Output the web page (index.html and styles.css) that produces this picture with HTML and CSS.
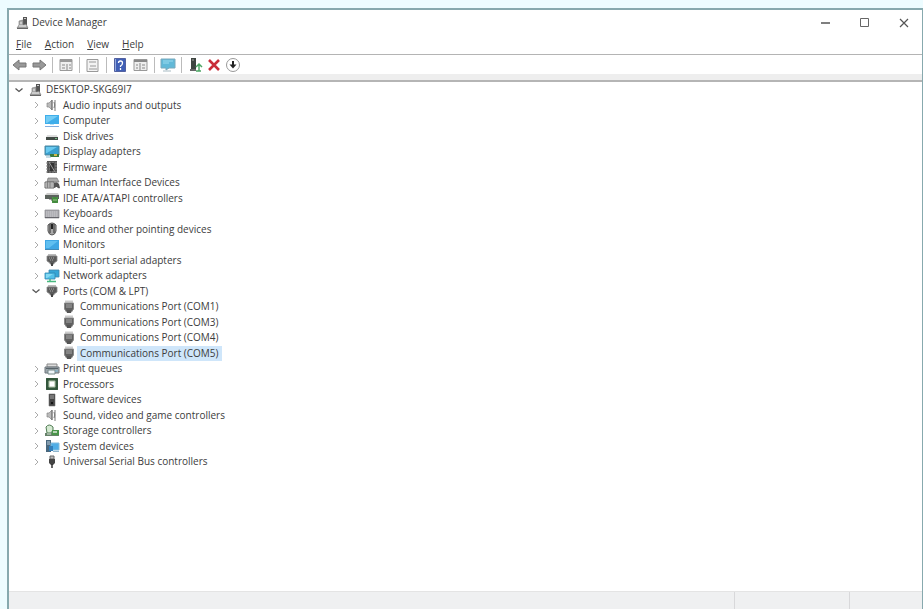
FILE: index.html
```html
<!DOCTYPE html>
<html lang="en">
<head>
<meta charset="utf-8">
<title>Device Manager</title>
<link rel="stylesheet" href="styles.css">
</head>
<body>
<svg class="sprite" aria-hidden="true">
  <symbol id="closed" viewBox="0 0 10 10"><path d="M4 2l3 3-3 3" fill="none" stroke="#aaa"/></symbol>
  <symbol id="open" viewBox="0 0 10 10"><path d="M1.500 3.500l3.500 3 3.500-3" fill="none" stroke="#555" stroke-width="1.300"/></symbol>
  <symbol id="pc" viewBox="0 0 16 14"><path d="M9 1h4v8H9z" fill="#555"/><path d="M10 2h2v1h-2z" fill="#ccc"/><path d="M5 5l4-1v5l3-1 2 4H3l2-3z" fill="#aaa" stroke="#777" stroke-width=".6"/><path d="M5 10h7M6 7h2" stroke="#eee"/><path d="M3 12.500h11" stroke="#666"/></symbol>
  <symbol id="speaker" viewBox="0 0 16 14"><path d="M3 5h2l3-3v10L5 9H3z" fill="#bbb" stroke="#888" stroke-width=".7"/><path d="M8 2v10" stroke="#666"/><path d="M10 4q1.500 3 0 6M11 2v11" fill="none" stroke="#777"/></symbol>
  <symbol id="computer" viewBox="0 0 16 14"><path d="M1 1h14v9H1z" fill="#40aeea"/><path d="M2 2h12L3 9H2z" fill="#72ccf5"/><path d="M6 10h4v1H6z" fill="#b8dff5"/><path d="M1 12.500h14" stroke="#82aee0"/></symbol>
  <symbol id="disk" viewBox="0 0 16 14"><path d="M3 6h10l1 3H2z" fill="#ddd"/><path d="M2 8h12v3H2z" fill="#424a45"/><path d="M11 9h2v1h-2z" fill="#72b77f"/></symbol>
  <symbol id="display" viewBox="0 0 16 14"><path d="M1 1h14v9H1z" fill="#389fcf" stroke="#4d879f"/><path d="M2 2h11L3 8H2z" fill="#69c9ef"/><path d="M6 9h9v3H6z" fill="#397a3f"/><path d="M10 9h3v2h-3z" fill="#d2b64b"/><path d="M2 12h5" stroke="#8db7cb"/></symbol>
  <symbol id="firmware" viewBox="0 0 16 14"><path d="M3 1h10v12H3z" fill="#555"/><path d="M2 3h12M2 6h12M2 9h12M2 12h12" stroke="#888" stroke-dasharray="2 1"/><path d="M6 3h4v8H6z" fill="#333"/><path d="M5 2l6 10" stroke="#999"/></symbol>
  <symbol id="hid" viewBox="0 0 16 14"><path d="M4 2h9l2 4H3z" fill="#aaa" stroke="#777" stroke-width=".7"/><path d="M1 6h9v6H1z" fill="#ddd" stroke="#666"/><path d="M2 8h7M2 10h7M3.500 6v6M6 6v6" stroke="#777" stroke-width=".8"/><path d="M10 7q3-2 5 1l1 4q-2 1-3-1h-1q-2 2-2 0z" fill="#555"/></symbol>
  <symbol id="ide" viewBox="0 0 16 14"><path d="M1 4l2-2h11l1 2z" fill="#ccc"/><path d="M1 4h14v4H1z" fill="#5b625d"/><path d="M5 8h3v2" fill="none" stroke="#555"/><path d="M8 6h6v6H8z" fill="#50944a"/><circle cx="11" cy="9" r="3" fill="#438a3e"/><path d="M9 9h4" stroke="#9bca87"/></symbol>
  <symbol id="keyboard" viewBox="0 0 16 14"><path d="M1 3h14v8H1z" fill="#a5a5aa" stroke="#8b8b90" stroke-width=".7"/><path d="M2 5h12M2 7h12M2 9h12" stroke="#dedee2" stroke-width=".8" stroke-dasharray="1.500 .5"/><path d="M1 10.500h14" stroke="#66666c"/></symbol>
  <symbol id="mouse" viewBox="0 0 16 14"><path d="M4 3q4-4 8 0v6q-1 4-4 4t-4-4z" fill="#aaa" stroke="#555"/><path d="M6 2v9M10 2v9" stroke="#444" stroke-width="1.200"/><path d="M8 2v5" stroke="#222" stroke-width="2"/></symbol>
  <symbol id="monitor" viewBox="0 0 16 14"><path d="M1 2h14v10H1z" fill="#3fa6e3"/><path d="M2 3h12L5 10H2z" fill="#60bff0"/><path d="M1 11.500h14" stroke="#4389b6"/></symbol>
  <symbol id="port" viewBox="0 0 16 14"><path d="M4 2h8" stroke="#bbb" stroke-width="2"/><path d="M3 3h10v5l-3 2v1H6v-1L3 8z" fill="#5b5b5b" stroke="#888" stroke-width=".8"/><path d="M5 5h6M6 7h4" stroke="#aaa" stroke-dasharray="1 1"/><path d="M8 10v3" stroke="#444" stroke-width="2"/></symbol>
  <symbol id="com" viewBox="0 0 16 14"><path d="M4 1.500h8" stroke="#ccc" stroke-width="2"/><path d="M3.500 3h9v6l-2 3h-5l-2-3z" fill="#606060" stroke="#8a8a8a"/><path d="M5 5h6M5 7h6" stroke="#bbb" stroke-width=".8"/><path d="M6 10h4v3H6z" fill="#555"/></symbol>
  <symbol id="network" viewBox="0 0 16 14"><path d="M5 1h10v7H5z" fill="#37a6d6" stroke="#4085ab" stroke-width=".8"/><path d="M1 4h10v6H1z" fill="#54c1e9" stroke="#3186b0" stroke-width=".8"/><path d="M2 5h7l-6 4H2z" fill="#85d9f2"/><path d="M6 10v3M3 12.500h9" stroke="#48b980" stroke-width="1.500"/></symbol>
  <symbol id="printer" viewBox="0 0 16 14"><path d="M3 2h10v3H3z" fill="#ddd" stroke="#888"/><path d="M1 5h14v6H1z" fill="#9da7ad" stroke="#71797e"/><path d="M4 8h7v4H4z" fill="#eef5f9" stroke="#788"/><path d="M2 6.500h12" stroke="#59646a"/><path d="M11 9h3" stroke="#78b8d6"/></symbol>
  <symbol id="cpu" viewBox="0 0 16 14"><path d="M2 1h12v12H2z" fill="#416348"/><path d="M5 4h6v6H5z" fill="#fff" stroke="#a6bda0"/><path d="M3 2h10v10H3z" fill="none" stroke="#274d31"/></symbol>
  <symbol id="software" viewBox="0 0 16 14"><path d="M5 1h6v12H5z" fill="#444" stroke="#777" stroke-width=".6"/><path d="M6 3h4M6 5h4" stroke="#aaa"/><path d="M7 9h2v2H7z" fill="#151515"/></symbol>
  <symbol id="storage" viewBox="0 0 16 14"><path d="M2 3q3-4 7 0v3l-2 3H3z" fill="#d5ead2" stroke="#4f7b53"/><path d="M1 9h14v3H1z" fill="#668269"/><path d="M8 6h7v5H8z" fill="#499449"/><path d="M9 7h4v2H9z" fill="#b8d4b6"/><path d="M3 10h4" stroke="#d8e5da"/></symbol>
  <symbol id="system" viewBox="0 0 16 14"><path d="M2 1h5v12H2z" fill="#49677d"/><path d="M3 3h3M3 5h3" stroke="#bdd0df"/><path d="M7 4h8v7H7z" fill="#4fade6" stroke="#81bbdd"/><path d="M5 7h4v5H5z" fill="#327fbb"/><path d="M9 12.500h6" stroke="#91b6cd"/></symbol>
  <symbol id="usb" viewBox="0 0 16 14"><path d="M6 1h4v3H6z" fill="#bbb" stroke="#666"/><path d="M5 4h6v4l-2 2H7L5 8z" fill="#444"/><path d="M8 9v4" stroke="#333" stroke-width="1.500"/></symbol>
</svg>

<main class="window">
  <header class="titlebar">
    <svg class="icon"><use href="#pc"/></svg>
    <h1 class="title">Device Manager</h1>
    <div class="controls">
      <button aria-label="Minimize"><svg viewBox="0 0 12 12"><path d="M1 6h9" stroke="#555" stroke-width="1.500"/></svg></button>
      <button aria-label="Maximize"><svg viewBox="0 0 12 12"><path d="M1.500 1.500h8v8h-8z" fill="none" stroke="#666"/></svg></button>
      <button aria-label="Close"><svg viewBox="0 0 12 12"><path d="M2 2l8 8M10 2l-8 8" stroke="#555" stroke-width="1.200"/></svg></button>
    </div>
  </header>

  <nav class="menubar" aria-label="Menu">
    <button><u>F</u>ile</button>
    <button><u>A</u>ction</button>
    <button><u>V</u>iew</button>
    <button><u>H</u>elp</button>
  </nav>

  <div class="toolbar" role="toolbar" aria-label="Tools">
    <div class="group">
      <button aria-label="Back"><svg viewBox="0 0 16 16"><path d="M1 8l6-5v3h7v4H7v3z" fill="#999" stroke="#777"/></svg></button>
      <button aria-label="Forward"><svg viewBox="0 0 16 16"><path d="M15 8L9 3v3H2v4h7v3z" fill="#999" stroke="#777"/></svg></button>
    </div>
    <div class="group">
      <button aria-label="Show console tree"><svg viewBox="0 0 16 16"><path d="M2 2.500h12v11H2z" fill="#eee" stroke="#999"/><path d="M2 4h12" stroke="#999" stroke-width="2"/><path d="M4 8h3M4 11h3M9 7v6M11 8h2M11 11h2" stroke="#888"/></svg></button>
    </div>
    <div class="group">
      <button aria-label="Properties"><svg viewBox="0 0 16 16"><path d="M2 2.500h11v12H2z" fill="#f3f3f3" stroke="#999"/><path d="M4 5h7M5 9h6M4 12h8" stroke="#999"/></svg></button>
    </div>
    <div class="group wide">
      <button aria-label="Help"><svg viewBox="0 0 16 16"><path d="M2.500 1.500h11v13h-11z" fill="#405fb6" stroke="#5261a0"/><path d="M3.500 2v12" stroke="#93a9dd"/><path d="M6.500 6q0-2 2-2t2 2-2 3v1M8.500 11v2" fill="none" stroke="#fff" stroke-width="1.300"/></svg></button>
      <button aria-label="Show action pane"><svg viewBox="0 0 16 16"><path d="M1 2.500h13v11H1z" fill="#eee" stroke="#999"/><path d="M1 4h13" stroke="#888" stroke-width="2"/><path d="M3 8h2M3 11h2M7 6v7M9 8h3M9 11h3" stroke="#888"/></svg></button>
    </div>
    <div class="group">
      <button aria-label="Scan for hardware changes"><svg viewBox="0 0 16 16"><path d="M1 2h14v9H9l-3 2v-2H1z" fill="#62b9d8" stroke="#7aaabd"/><path d="M3 4h10M3 6h6" stroke="#9cdbef"/><path d="M3 14h8" stroke="#a8bbc3"/></svg></button>
    </div>
    <div class="group">
      <button aria-label="Update driver"><svg viewBox="0 0 16 16"><path d="M4 1h5v11H4z" fill="#3e4541"/><path d="M5 3h2" stroke="#aaa"/><path d="M3 13h6" stroke="#666" stroke-width="2"/><path d="M12 7v7M9 10l3-3 3 3M9 14h5" fill="none" stroke="#4da665" stroke-width="1.500"/></svg></button>
      <button aria-label="Uninstall device"><svg viewBox="0 0 16 16"><path d="M3 3l10 10M13 3L3 13" stroke="#c92c38" stroke-width="2.600"/></svg></button>
      <button aria-label="Disable device"><svg viewBox="0 0 16 16"><circle cx="8" cy="8" r="6.500" fill="#fff" stroke="#999"/><path d="M8 4v4" stroke="#222" stroke-width="2"/><path d="M4.500 7.500h7L8 11.500z" fill="#222"/></svg></button>
    </div>
  </div>

  <ul class="tree" role="tree" aria-label="Devices">
    <li class="root"><button aria-label="Collapse"><svg><use href="#open"/></svg></button><svg class="icon"><use href="#pc"/></svg><span>DESKTOP-SKG69I7</span></li>
    <li><button aria-label="Expand"><svg><use href="#closed"/></svg></button><svg class="icon"><use href="#speaker"/></svg><span>Audio inputs and outputs</span></li>
    <li><button aria-label="Expand"><svg><use href="#closed"/></svg></button><svg class="icon"><use href="#computer"/></svg><span>Computer</span></li>
    <li><button aria-label="Expand"><svg><use href="#closed"/></svg></button><svg class="icon"><use href="#disk"/></svg><span>Disk drives</span></li>
    <li><button aria-label="Expand"><svg><use href="#closed"/></svg></button><svg class="icon"><use href="#display"/></svg><span>Display adapters</span></li>
    <li><button aria-label="Expand"><svg><use href="#closed"/></svg></button><svg class="icon"><use href="#firmware"/></svg><span>Firmware</span></li>
    <li><button aria-label="Expand"><svg><use href="#closed"/></svg></button><svg class="icon"><use href="#hid"/></svg><span>Human Interface Devices</span></li>
    <li><button aria-label="Expand"><svg><use href="#closed"/></svg></button><svg class="icon"><use href="#ide"/></svg><span>IDE ATA/ATAPI controllers</span></li>
    <li><button aria-label="Expand"><svg><use href="#closed"/></svg></button><svg class="icon"><use href="#keyboard"/></svg><span>Keyboards</span></li>
    <li><button aria-label="Expand"><svg><use href="#closed"/></svg></button><svg class="icon"><use href="#mouse"/></svg><span>Mice and other pointing devices</span></li>
    <li><button aria-label="Expand"><svg><use href="#closed"/></svg></button><svg class="icon"><use href="#monitor"/></svg><span>Monitors</span></li>
    <li><button aria-label="Expand"><svg><use href="#closed"/></svg></button><svg class="icon"><use href="#port"/></svg><span>Multi-port serial adapters</span></li>
    <li><button aria-label="Expand"><svg><use href="#closed"/></svg></button><svg class="icon"><use href="#network"/></svg><span>Network adapters</span></li>
    <li><button aria-label="Collapse"><svg><use href="#open"/></svg></button><svg class="icon"><use href="#port"/></svg><span>Ports (COM &amp; LPT)</span></li>
    <li class="device"><svg class="icon"><use href="#com"/></svg><span>Communications Port (COM1)</span></li>
    <li class="device"><svg class="icon"><use href="#com"/></svg><span>Communications Port (COM3)</span></li>
    <li class="device"><svg class="icon"><use href="#com"/></svg><span>Communications Port (COM4)</span></li>
    <li class="device selected"><svg class="icon"><use href="#com"/></svg><span>Communications Port (COM5)</span></li>
    <li><button aria-label="Expand"><svg><use href="#closed"/></svg></button><svg class="icon"><use href="#printer"/></svg><span>Print queues</span></li>
    <li><button aria-label="Expand"><svg><use href="#closed"/></svg></button><svg class="icon"><use href="#cpu"/></svg><span>Processors</span></li>
    <li><button aria-label="Expand"><svg><use href="#closed"/></svg></button><svg class="icon"><use href="#software"/></svg><span>Software devices</span></li>
    <li><button aria-label="Expand"><svg><use href="#closed"/></svg></button><svg class="icon"><use href="#speaker"/></svg><span>Sound, video and game controllers</span></li>
    <li><button aria-label="Expand"><svg><use href="#closed"/></svg></button><svg class="icon"><use href="#storage"/></svg><span>Storage controllers</span></li>
    <li><button aria-label="Expand"><svg><use href="#closed"/></svg></button><svg class="icon"><use href="#system"/></svg><span>System devices</span></li>
    <li><button aria-label="Expand"><svg><use href="#closed"/></svg></button><svg class="icon"><use href="#usb"/></svg><span>Universal Serial Bus controllers</span></li>
  </ul>

  <footer class="statusbar"><span></span><span></span><span></span></footer>
</main>
</body>
</html>
```
FILE: styles.css
```css
* {
  box-sizing: border-box;
}

body {
  display: flex;
  min-height: 100vh;
  margin: 0;
  padding: 8px 0 0 7px;
  background: #edfcff;
  color: #3c3c3c;
  font: 10px/15px "Open Sans", "Noto Sans", sans-serif;
}

.sprite {
  position: absolute;
  width: 0;
  height: 0;
}

button {
  display: flex;
  padding: 0;
  border: 0;
  background: none;
  color: inherit;
  font: inherit;
}

.icon {
  flex: none;
  width: 16px;
  height: 14px;
}

.window {
  display: flex;
  flex: 1;
  flex-direction: column;
  border: solid #87a9ae;
  border-width: 2px 1px 0 2px;
  background: #fff;
}

.titlebar {
  display: flex;
  align-items: center;
  gap: 2px;
  height: 25px;
  padding-left: 5px;
}

.title {
  margin: 0;
  font-size: 10px;
  font-weight: 400;
}

.controls {
  display: flex;
  gap: 27px;
  margin-left: auto;
  padding-right: 12px;
}

.controls svg {
  width: 12px;
  height: 12px;
}

.menubar {
  display: flex;
  gap: 13px;
  height: 19px;
  padding-left: 7px;
}

.menubar button {
  display: block;
}

.toolbar {
  display: flex;
  align-items: center;
  height: 28px;
  padding-left: 3px;
  border-top: 1px solid #b4b4b4;
  border-bottom: 2px solid #b5b5b5;
  background: linear-gradient(to top, #eee 6px, #fff 6px);
  padding-bottom: 5px;
}

.group {
  display: flex;
  gap: 3px;
}

.group.wide {
  gap: 5px;
}

.group + .group {
  margin-left: 5px;
  padding-left: 5px;
  border-left: 1px solid #bbb;
}

.group svg {
  width: 16px;
  height: 16px;
}

.tree {
  flex: 1;
  margin: 0;
  padding: 0;
  list-style: none;
}

.tree li {
  display: flex;
  align-items: center;
  gap: 3px;
  height: 15px;
  padding-left: 22px;
  white-space: nowrap;
}

.tree li:nth-child(even) {
  height: 16px;
}

.tree .root {
  padding-left: 5px;
}

.tree .device {
  padding-left: 52px;
}

.tree button svg {
  width: 10px;
  height: 10px;
}

.selected span {
  margin-left: -3px;
  padding: 0 3px;
  background: #cfe6fa;
}

.statusbar {
  display: grid;
  grid-template-columns: 1fr 115px 73px;
  height: 18px;
  border-top: 1px solid #e4e4e4;
  background: #eff0f1;
}

.statusbar span + span {
  border-left: 1px solid #d8d8da;
}
```
